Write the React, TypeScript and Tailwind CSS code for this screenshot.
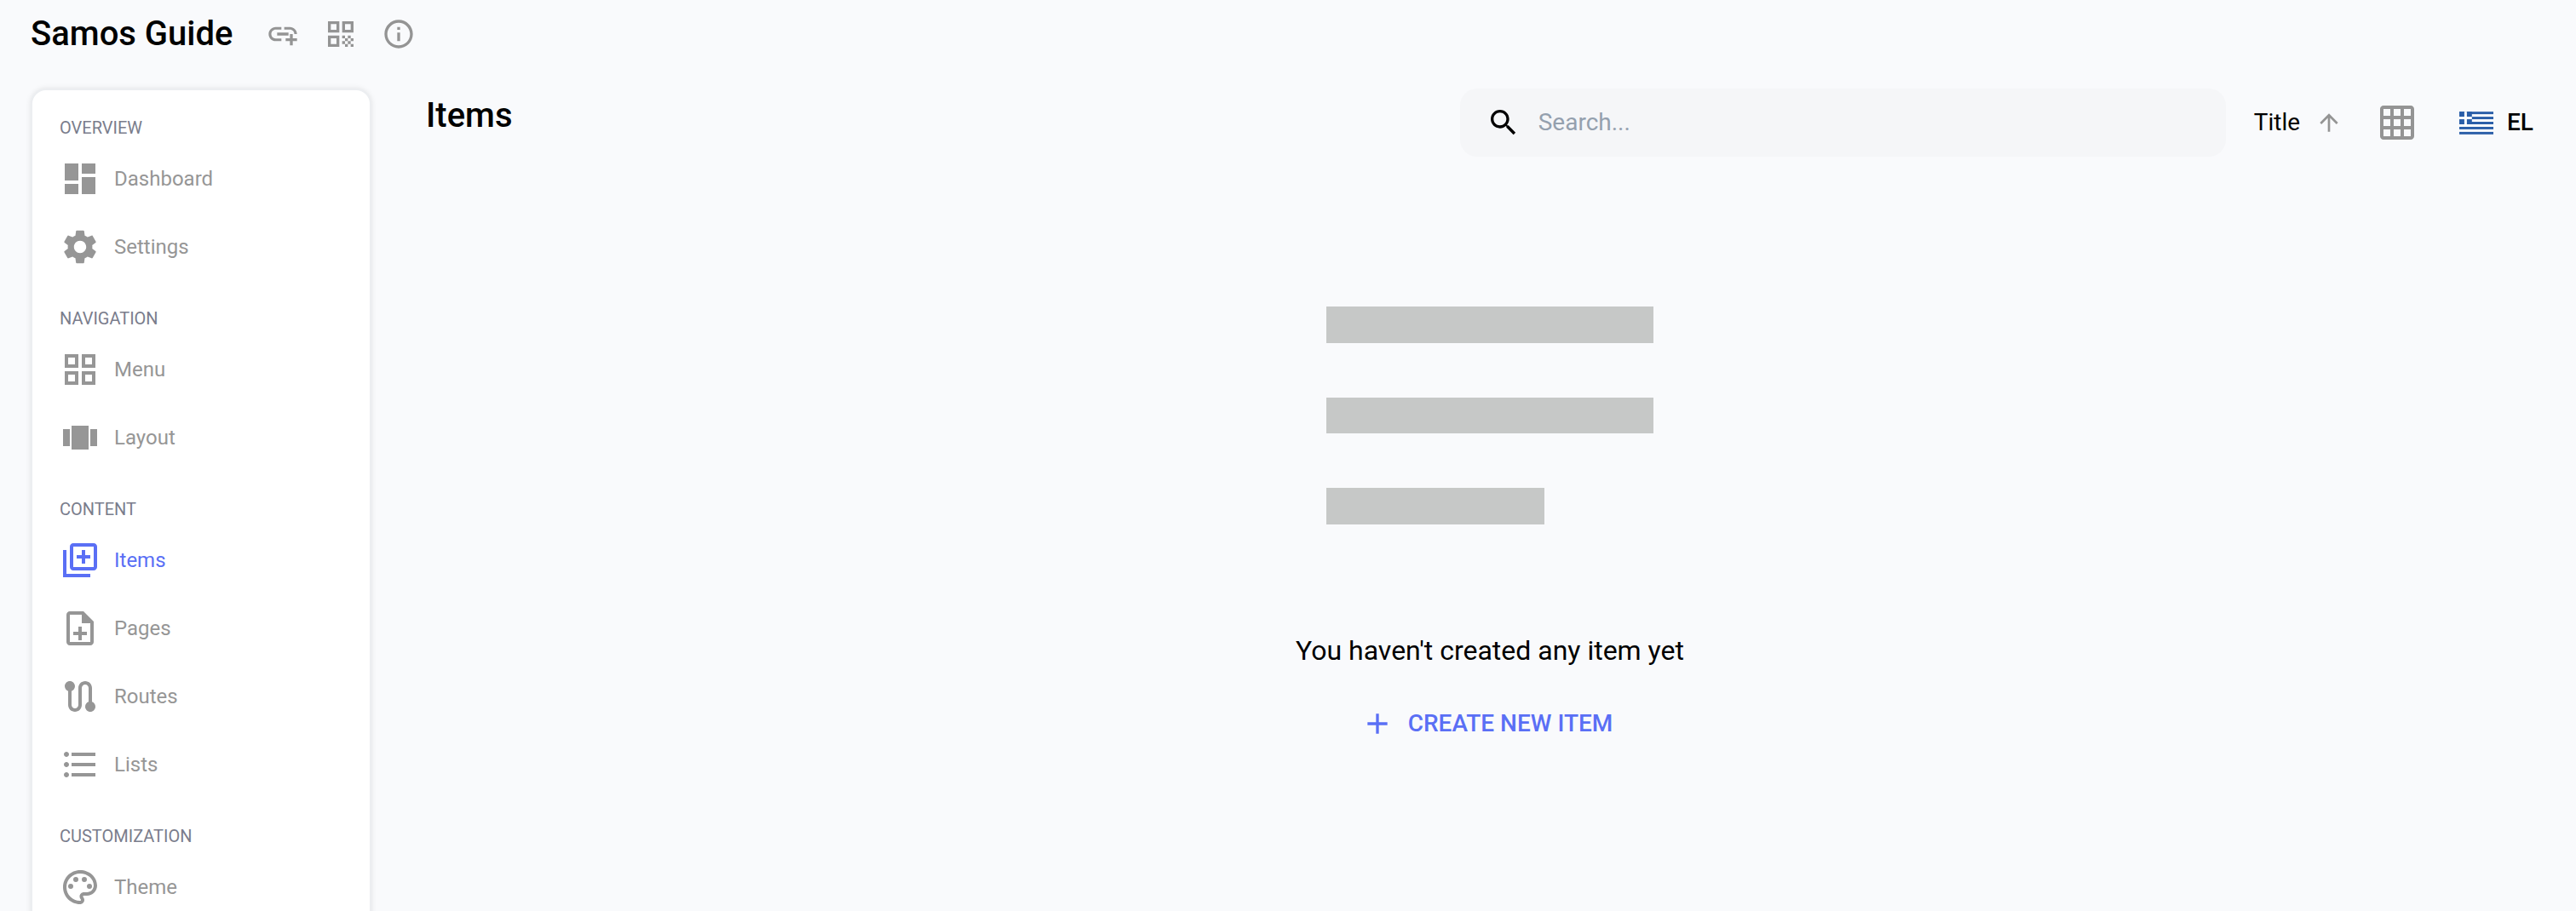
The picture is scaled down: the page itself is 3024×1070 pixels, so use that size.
const DASH = "M3 13h8V3H3v10zm0 8h8v-6H3v6zm10 0h8V11h-8v10zm0-18v6h8V3h-8z";
const GEAR = "M19.14 12.94c.04-.3.06-.61.06-.94 0-.32-.02-.64-.07-.94l2.03-1.58c.18-.14.23-.41.12-.61l-1.92-3.32c-.12-.22-.37-.29-.59-.22l-2.39.96c-.5-.38-1.03-.7-1.62-.94l-.36-2.54c-.04-.24-.24-.41-.48-.41h-3.84c-.24 0-.43.17-.47.41l-.36 2.54c-.59.24-1.13.57-1.62.94l-2.39-.96c-.22-.08-.47 0-.59.22L2.74 8.87c-.12.21-.08.47.12.61l2.03 1.58c-.05.3-.09.63-.09.94s.02.64.07.94l-2.03 1.58c-.18.14-.23.41-.12.61l1.92 3.32c.12.22.37.29.59.22l2.39-.96c.5.38 1.03.7 1.62.94l.36 2.54c.05.24.24.41.48.41h3.84c.24 0 .44-.17.47-.41l.36-2.54c.59-.24 1.13-.56 1.62-.94l2.39.96c.22.08.47 0 .59-.22l1.92-3.32c.12-.22.07-.47-.12-.61l-2.01-1.58zM12 15.6c-1.98 0-3.6-1.62-3.6-3.6s1.62-3.6 3.6-3.6 3.6 1.62 3.6 3.6-1.62 3.6-3.6 3.6z";
const GRIDVIEW = "M3 3v8h8V3H3zm6 6H5V5h4v4zm-6 4v8h8v-8H3zm6 6H5v-4h4v4zm4-16v8h8V3h-8zm6 6h-4V5h4v4zm-6 4v8h8v-8h-8zm6 6h-4v-4h4v4z";
const CAROUSEL = "M2 7h4v10H2V7zm5 12h10V5H7v14zM18 7h4v10h-4V7z";
const LIBADD = "M4 6H2v16h16v-2H4V6zm16-4H8c-1.1 0-2 .9-2 2v12c0 1.1.9 2 2 2h12c1.1 0 2-.9 2-2V4c0-1.1-.9-2-2-2zm0 14H8V4h12v12zm-7-2h2v-3h3V9h-3V6h-2v3h-3v2h3z";
const NOTE = "M13 11h-2v3H8v2h3v3h2v-3h3v-2h-3zm1-9H6c-1.1 0-2 .9-2 2v16c0 1.1.89 2 1.99 2H18c1.1 0 2-.9 2-2V8l-6-6zm4 18H6V4h7v5h5v11z";
const ROUTE = "M19 15.18V7c0-2.21-1.79-4-4-4s-4 1.79-4 4v10c0 1.1-.9 2-2 2s-2-.9-2-2V8.82C8.16 8.4 9 7.3 9 6c0-1.66-1.34-3-3-3S3 4.34 3 6c0 1.3.84 2.4 2 2.82V17c0 2.21 1.79 4 4 4s4-1.79 4-4V7c0-1.1.9-2 2-2s2 .9 2 2v8.18c-1.16.41-2 1.51-2 2.82 0 1.66 1.34 3 3 3s3-1.34 3-3c0-1.3-.84-2.4-2-2.82z";
const LIST = "M4 10.5c-.83 0-1.5.67-1.5 1.5s.67 1.5 1.5 1.5 1.5-.67 1.5-1.5-.67-1.5-1.5-1.5zm0-6c-.83 0-1.5.67-1.5 1.5S3.17 7.5 4 7.5 5.5 6.83 5.5 6 4.83 4.5 4 4.5zm0 12c-.83 0-1.5.68-1.5 1.5s.68 1.5 1.5 1.5 1.5-.68 1.5-1.5-.67-1.5-1.5-1.5zM7 19h14v-2H7v2zm0-6h14v-2H7v2zm0-8v2h14V5H7z";
const PALETTE = "M12 22C6.49 22 2 17.51 2 12S6.49 2 12 2s10 4.04 10 9c0 3.31-2.69 6-6 6h-1.77c-.28 0-.5.22-.5.5 0 .12.05.23.13.33.41.47.64 1.06.64 1.67 0 1.38-1.12 2.5-2.5 2.5zm0-18c-4.41 0-8 3.59-8 8s3.59 8 8 8c.28 0 .5-.22.5-.5 0-.16-.08-.28-.14-.35-.41-.46-.63-1.05-.63-1.65 0-1.38 1.12-2.5 2.5-2.5H16c2.21 0 4-1.79 4-4 0-3.86-3.59-7-8-7zM6.5 10a1.5 1.5 0 1 0 0 3 1.5 1.5 0 0 0 0-3zm3-4a1.5 1.5 0 1 0 0 3 1.5 1.5 0 0 0 0-3zm5 0a1.5 1.5 0 1 0 0 3 1.5 1.5 0 0 0 0-3zm3 4a1.5 1.5 0 1 0 0 3 1.5 1.5 0 0 0 0-3z";
const ADDLINK = "M8 11h8v2H8zm12.1 1H22c0-2.76-2.24-5-5-5h-4v1.9h4c1.71 0 3.1 1.39 3.1 3.1zM3.9 12c0-1.71 1.39-3.1 3.1-3.1h4V7H7c-2.76 0-5 2.24-5 5s2.24 5 5 5h4v-1.9H7c-1.71 0-3.1-1.39-3.1-3.1zM19 12h-2v3h-3v2h3v3h2v-3h3v-2h-3z";
const QR = "M3 11h8V3H3v8zm2-6h4v4H5V5zM3 21h8v-8H3v8zm2-6h4v4H5v-4zM13 3v8h8V3h-8zm6 6h-4V5h4v4zM19 19h2v2h-2zM13 13h2v2h-2zM15 15h2v2h-2zM13 17h2v2h-2zM15 19h2v2h-2zM17 17h2v2h-2zM17 13h2v2h-2zM19 15h2v2h-2z";
const INFO = "M11 7h2v2h-2zm0 4h2v6h-2zm1-9C6.48 2 2 6.48 2 12s4.48 10 10 10 10-4.48 10-10S17.52 2 12 2zm0 18c-4.41 0-8-3.59-8-8s3.59-8 8-8 8 3.59 8 8-3.59 8-8 8z";
const SEARCH = "M15.5 14h-.79l-.28-.27C15.41 12.59 16 11.11 16 9.5 16 5.91 13.09 3 9.5 3S3 5.91 3 9.5 5.91 16 9.5 16c1.61 0 3.09-.59 4.23-1.57l.27.28v.79l5 4.99L20.49 19l-4.99-5zm-6 0C7.01 14 5 11.99 5 9.5S7.01 5 9.5 5 14 7.01 14 9.5 11.99 14 9.5 14z";
const UP = "M4 12l1.41 1.41L11 7.83V20h2V7.83l5.58 5.59L20 12l-8-8-8 8z";
const GRIDON = "M20 2H4c-1.1 0-2 .9-2 2v16c0 1.1.9 2 2 2h16c1.1 0 2-.9 2-2V4c0-1.1-.9-2-2-2zM8 20H4v-4h4v4zm0-6H4v-4h4v4zm0-6H4V4h4v4zm6 12h-4v-4h4v4zm0-6h-4v-4h4v4zm0-6h-4V4h4v4zm6 12h-4v-4h4v4zm0-6h-4v-4h4v4zm0-6h-4V4h4v4z";
const ADD = "M19 13h-6v6h-2v-6H5v-2h6V5h2v6h6v2z";

function Icon({ d, className }: { d: string; className: string }) {
  return (
    <svg viewBox="0 0 24 24" fill="currentColor" className={className}>
      <path d={d} />
    </svg>
  );
}

function NavItem({ d, label, active }: { d: string; label: string; active?: boolean }) {
  return (
    <div className={`flex h-[80px] items-center gap-[16px] pl-[32px] ${active ? "text-[#5a6ff5]" : "text-[#969696]"}`}>
      <Icon d={d} className="h-[48px] w-[48px] shrink-0" />
      <span className="text-[24px] leading-[32px]">{label}</span>
    </div>
  );
}

function Section({ title, children }: { title: string; children: React.ReactNode }) {
  return (
    <div className="pb-[30px]">
      <div className="pl-[32px] text-[20px] leading-[28px] text-[#7a7d8c]">{title}</div>
      <div className="mt-[6px]">{children}</div>
    </div>
  );
}

function GreekFlag() {
  return (
    <svg viewBox="0 0 27 18" className="h-[27px] w-[40px] shrink-0">
      <rect width="27" height="18" fill="#fff" />
      {[0, 4, 8, 12, 16].map((y) => (
        <rect key={y} x="0" y={y} width="27" height="2" fill="#2a5ea8" />
      ))}
      <rect width="10" height="10" fill="#2a5ea8" />
      <rect x="4" width="2" height="10" fill="#fff" />
      <rect y="4" width="10" height="2" fill="#fff" />
    </svg>
  );
}

export default function App() {
  return (
    <div className="flex h-[1070px] flex-col overflow-hidden bg-[#f9fafc] text-black" style={{ fontFamily: "Roboto, sans-serif" }}>
      <header className="flex h-[80px] shrink-0 items-center pl-[36px]">
        <h1 className="text-[40px] font-medium leading-[48px]">Samos Guide</h1>
        <div className="ml-[38px] flex items-center gap-[28px] text-[#949494]">
          <Icon d={ADDLINK} className="h-[40px] w-[40px]" />
          <Icon d={QR} className="h-[40px] w-[40px]" />
          <Icon d={INFO} className="h-[40px] w-[40px]" />
        </div>
      </header>
      <div className="flex min-h-0 flex-1 pl-[36px] pt-[24px]">
        <aside className="h-[1200px] w-[400px] shrink-0 rounded-[18px] border-2 border-[#eceef1] bg-white pt-[30px] shadow-[0_0_6px_rgba(0,0,0,0.10)]">
          <Section title="OVERVIEW">
            <NavItem d={DASH} label="Dashboard" />
            <NavItem d={GEAR} label="Settings" />
          </Section>
          <Section title="NAVIGATION">
            <NavItem d={GRIDVIEW} label="Menu" />
            <NavItem d={CAROUSEL} label="Layout" />
          </Section>
          <Section title="CONTENT">
            <NavItem d={LIBADD} label="Items" active />
            <NavItem d={NOTE} label="Pages" />
            <NavItem d={ROUTE} label="Routes" />
            <NavItem d={LIST} label="Lists" />
          </Section>
          <Section title="CUSTOMIZATION">
            <NavItem d={PALETTE} label="Theme" />
          </Section>
        </aside>
        <main className="min-w-0 flex-1 pl-[64px] pr-[50px]">
          <div className="flex items-start justify-between">
            <h2 className="pt-[8px] text-[40px] font-medium leading-[48px]">Items</h2>
            <div className="flex items-center">
              <div className="flex h-[80px] w-[899px] items-center gap-[21px] rounded-[20px] bg-[#f5f6f8] pl-[31px]">
                <Icon d={SEARCH} className="h-[40px] w-[40px] shrink-0 text-black" />
                <span className="text-[28px] leading-[36px] text-[#94a0ae]">Search...</span>
              </div>
              <span className="ml-[33px] text-[28px] leading-[36px]">Title</span>
              <Icon d={UP} className="ml-[18px] h-[32px] w-[32px] text-[#949494]" />
              <Icon d={GRIDON} className="ml-[40px] h-[48px] w-[48px] text-[#949494]" />
              <div className="ml-[49px]"><GreekFlag /></div>
              <span className="ml-[16px] text-[28px] font-medium leading-[36px]">EL</span>
            </div>
          </div>
          <div className="flex flex-col items-center pl-[24px] pt-[176px]">
            <div className="flex w-[384px] flex-col gap-[64px]">
              <div className="h-[42.5px] w-full bg-[#c6c8c7]" />
              <div className="h-[42.5px] w-full bg-[#c6c8c7]" />
              <div className="h-[42.5px] w-[256px] bg-[#c6c8c7]" />
            </div>
            <p className="mt-[128px] text-[32px] leading-[40px]">You haven't created any item yet</p>
            <div className="mt-[46px] flex items-center gap-[16px] pr-[8px] text-[#5a6ff5]">
              <Icon d={ADD} className="h-[40px] w-[40px]" />
              <span className="text-[28px] font-medium leading-[40px]">CREATE NEW ITEM</span>
            </div>
          </div>
        </main>
      </div>
    </div>
  );
}
